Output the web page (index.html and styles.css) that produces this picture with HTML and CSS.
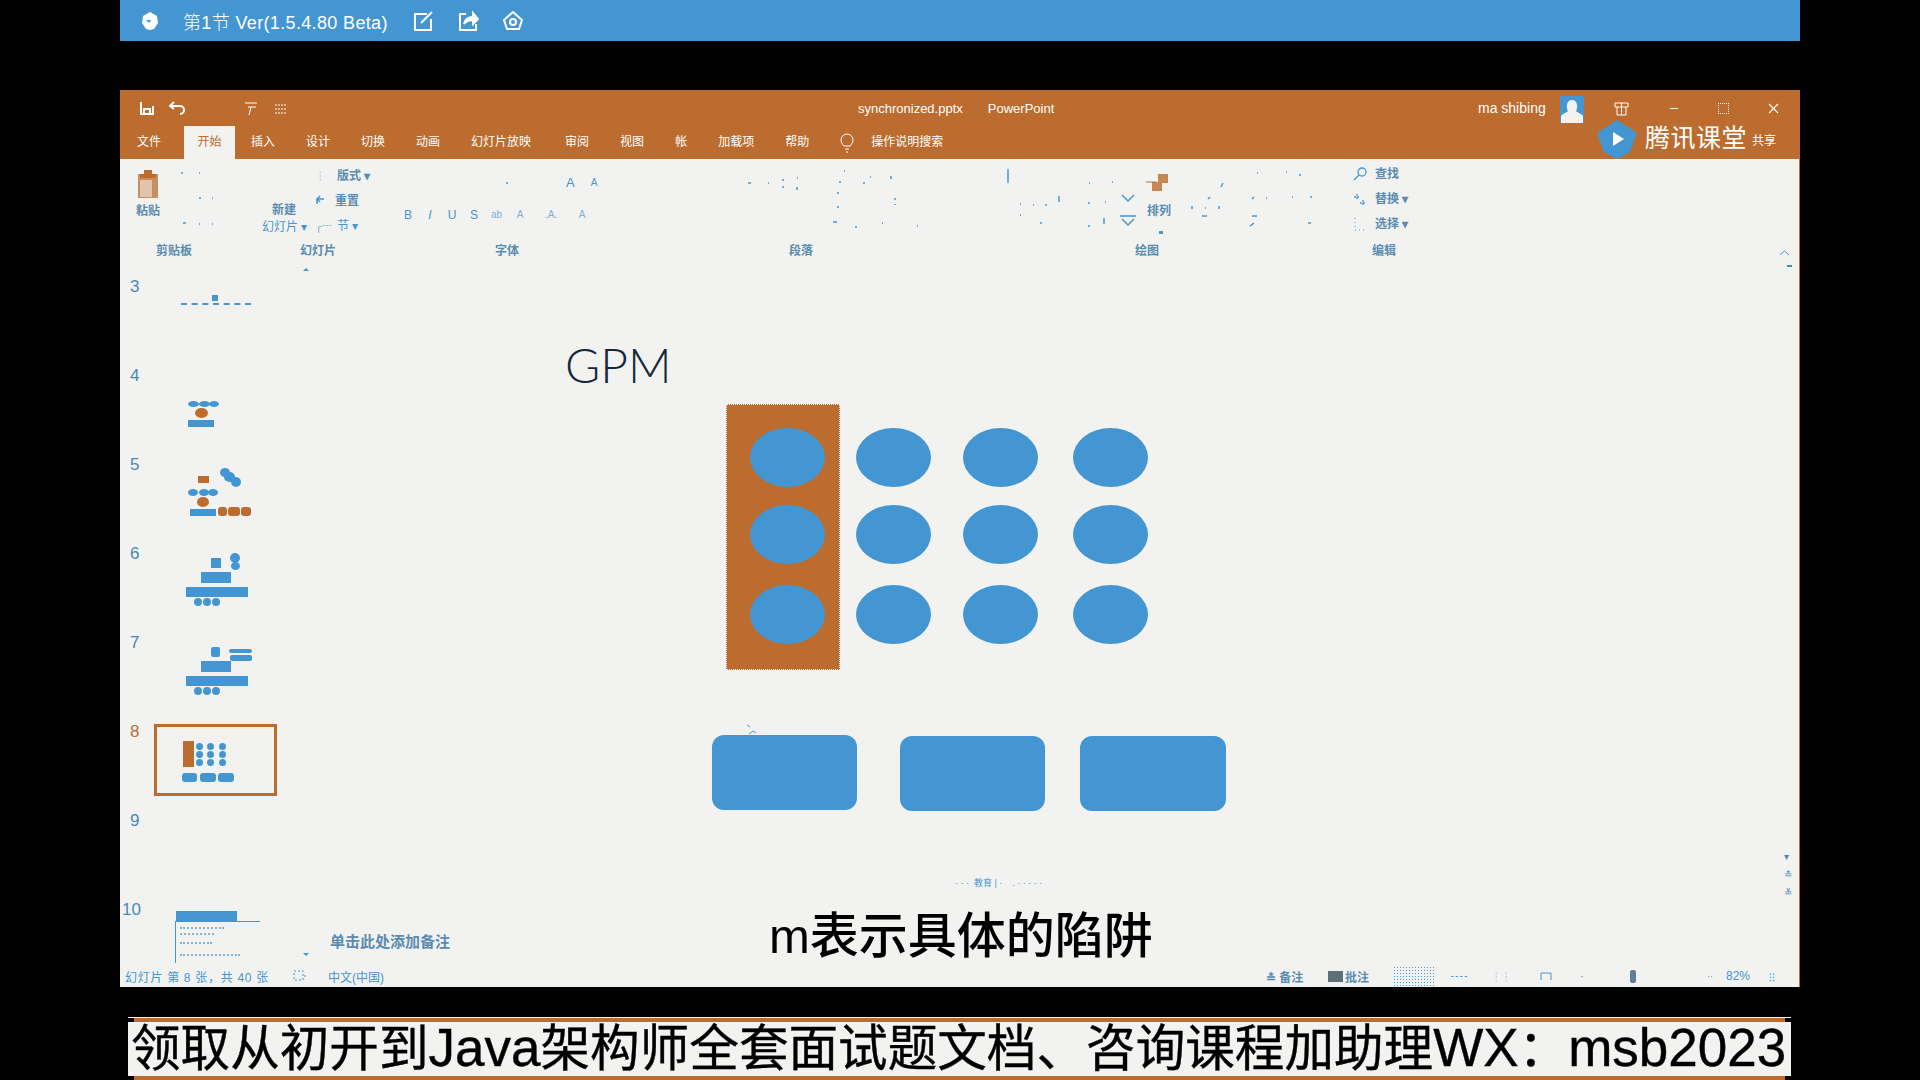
FILE: index.html
```html
<!DOCTYPE html>
<html lang="zh-CN">
<head>
<meta charset="utf-8">
<title>synchronized.pptx - PowerPoint</title>
<link rel="stylesheet" href="styles.css">
</head>
<body>
<header class="topbar">
  <svg class="tb-logo" width="20" height="20" viewBox="0 0 20 20"><path d="M10 1l7 4 1 7-4 6-4 1-4-1-4-6 1-7z" fill="#fff"/><path d="M6 9h5l-2 3z" fill="#4496d2"/></svg>
  <span class="tb-title">第1节 Ver(1.5.4.80 Beta)</span>
  <svg class="tb-icon" width="22" height="22" viewBox="0 0 22 22" fill="none" stroke="#fff" stroke-width="2"><path d="M15 4H3v16h16V9"/><path d="M9 13L20 2"/></svg>
  <svg class="tb-icon" width="22" height="22" viewBox="0 0 22 22" fill="none" stroke="#fff" stroke-width="2"><path d="M9 4H3v16h16v-6"/><path d="M7 14c1-5 5-7 9-7V3l5 6-5 5v-4c-4 0-7 1-9 4z" fill="#fff"/></svg>
  <svg class="tb-icon" width="22" height="22" viewBox="0 0 22 22" fill="none" stroke="#fff" stroke-width="2"><path d="M11 2l9 8-3 9H5l-3-9z"/><circle cx="11" cy="12" r="3"/></svg>
</header>

<main class="window">
  <div class="titlebar">
    <div class="qat">
      <svg width="16" height="16" viewBox="0 0 16 16" fill="none" stroke="#fff" stroke-width="2"><path d="M2 2v12h12V6"/><path d="M5 14V9h6v5"/></svg>
      <svg width="18" height="16" viewBox="0 0 18 16" fill="none" stroke="#fff" stroke-width="2"><path d="M2 6h9a4 4 0 0 1 0 8"/><path d="M5 2L1 6l4 3"/></svg>
      <svg class="qat-gap" width="16" height="16" viewBox="0 0 16 16" fill="none" stroke="#fff" stroke-width="1"><path d="M2 3h12M5 7h8M8 7l-2 8"/></svg>
      <svg width="16" height="16" viewBox="0 0 16 16" fill="none" stroke="#fff" stroke-width="1" stroke-dasharray="2 1"><path d="M2 5h12M2 9h12M2 13h12"/></svg>
    </div>
    <div class="doc-name"><span>synchronized.pptx</span><span>PowerPoint</span></div>
    <div class="account">
      <span class="user">ma shibing</span>
      <svg class="avatar" width="24" height="27" viewBox="0 0 24 27"><rect width="24" height="27" fill="#4496d2"/><path d="M1 27v-7c2-3 5-3 7-5-2-3-2-11 4-11s6 8 4 11c2 2 5 2 7 5v7z" fill="#f2f3f0"/></svg>
      <svg class="win-ic" width="15" height="15" viewBox="0 0 15 15" fill="none" stroke="#fff"><path d="M1 2h13v4H1zM3 6v8h9V6M7.500 2v12"/></svg>
      <span class="win-min"></span>
      <span class="win-max"></span>
      <svg class="win-close" width="11" height="11" viewBox="0 0 11 11" stroke="#fff" stroke-width="1.200"><path d="M1 1l9 9M10 1l-9 9"/></svg>
    </div>
  </div>
  <div class="tabbar">
    <nav class="tabs">
      <span class="tab t-file">文件</span>
      <span class="tab active">开始</span>
      <span class="tab t-insert">插入</span>
      <span class="tab">设计</span>
      <span class="tab">切换</span>
      <span class="tab">动画</span>
      <span class="tab t-show">幻灯片放映</span>
      <span class="tab">审阅</span>
      <span class="tab">视图</span>
      <span class="tab t-acct">帐</span>
      <span class="tab">加载项</span>
      <span class="tab">帮助</span>
      <svg class="bulb" width="14" height="20" viewBox="0 0 14 20" fill="none" stroke="#fff"><path d="M4 13C2 11 1 9 1 7a6 6 0 0 1 12 0c0 2-1 4-3 6zM5 16h4M6 19h2"/></svg>
      <span class="tab t-search">操作说明搜索</span>
    </nav>
    <div class="tencent">
      <svg width="40" height="39" viewBox="0 0 40 39"><path d="M20 0l20 13-7 19-13 7-13-7L0 13z" fill="#4496d2"/><path d="M16 12l11 7-11 7z" fill="#fff"/></svg>
      <span class="tc-name">腾讯课堂</span>
      <span class="tc-share">共享</span>
    </div>
  </div>

  <section class="ribbon">
    <div class="group g-clip">
      <div class="g-body">
        <div class="paste">
          <svg width="24" height="30" viewBox="0 0 24 30"><rect x="2" y="6" width="20" height="24" fill="#bb6c2e" opacity=".75"/><rect x="4" y="12" width="12" height="17" fill="#e0c4ab"/><path d="M8 6V2h8v4h4v4H4V6z" fill="#bb6c2e"/></svg>
          <span class="r-label">粘贴</span>
        </div>
      </div>
      <div class="g-name">剪贴板</div>
    </div>
    <div class="group g-slides">
      <div class="g-body g-row">
        <div class="newslide"><span class="r-label ctr">新建</span><span class="r-text">幻灯片 ▾</span></div>
        <div class="stack">
          <div class="st-row"><i class="tick">┆</i><span class="r-label">版式 ▾</span></div>
          <div class="st-row"><svg width="12" height="12" viewBox="0 0 12 12" fill="none" stroke="#4496d2" stroke-width="1.500"><path d="M2 9V4h7M5 1L2 4l3 3"/></svg><span class="r-label">重置</span></div>
          <div class="st-row"><i class="tick">┌┄</i><span class="r-text">节 ▾</span></div>
        </div>
      </div>
      <div class="g-name">幻灯片</div>
    </div>
    <div class="group g-font">
      <div class="g-body">
        <div class="font-a"><span>A</span><span class="small-a">A</span></div>
        <div class="font-b"><span>B</span><em>I</em><span>U</span><span>S</span><span class="faint">ab</span><span class="faint">A</span><span class="faint wide">.A.</span><span class="faint">A</span></div>
      </div>
      <div class="g-name">字体</div>
    </div>
    <div class="group g-para">
      <div class="g-body"></div>
      <div class="g-name">段落</div>
    </div>
    <div class="group g-draw">
      <div class="g-body g-row">
        <div class="chevrons">
          <svg width="14" height="9" viewBox="0 0 14 9" fill="none" stroke="#4496d2" stroke-width="1.500"><path d="M1 1l6 6 6-6"/></svg>
          <svg width="16" height="12" viewBox="0 0 16 12" fill="none" stroke="#4496d2" stroke-width="1.500"><path d="M0 1h16M2 4l6 6 6-6"/></svg>
        </div>
        <div class="arrange">
          <svg width="22" height="17" viewBox="0 0 22 17"><path d="M12 0h10v9H12z M6 8h10v9H6z" fill="#bb6c2e" opacity=".8"/><path d="M0 8h10" stroke="#bb6c2e"/></svg>
          <span class="r-label">排列</span>
          <i class="tiny-down"></i>
        </div>
      </div>
      <div class="g-name">绘图</div>
    </div>
    <div class="group g-edit">
      <div class="g-body edit-list">
        <div class="st-row"><svg width="14" height="14" viewBox="0 0 14 14" fill="none" stroke="#4496d2" stroke-width="1.300"><circle cx="9" cy="5" r="4"/><path d="M6 8l-5 5"/></svg><span class="r-label">查找</span></div>
        <div class="st-row"><svg width="14" height="14" viewBox="0 0 14 14" fill="none" stroke="#4496d2" stroke-width="1.300" stroke-dasharray="2 1"><path d="M1 5h6M4 2v6M7 11h6M10 8v5"/></svg><span class="r-label">替换 ▾</span></div>
        <div class="st-row"><svg width="14" height="14" viewBox="0 0 14 14" fill="none" stroke="#4496d2" stroke-dasharray="1 3"><path d="M2 1v12h9"/></svg><span class="r-label">选择 ▾</span></div>
      </div>
      <div class="g-name">编辑</div>
    </div>
    <svg class="specks" width="1680" height="103" viewBox="0 0 1680 103" fill="none" stroke="#4496d2" stroke-width="1.500">
      <path d="M61 14h2M79 14h1M79 39h2M92 39h1M63 64h3M79 65h1M92 65h1M386 24h2M628 24h3M663 20v2M663 27v2M743 24h2M648 24h1M677 19h1M677 28v3M724 12h1M719 23h2M750 18h1M771 17v3M717 34h2M775 39v2M717 48h2M775 45v1M713 63h4M735 68h2M762 64h1M797 67h1M900 45h1M913 46h1M925 46h2M939 37v6M969 24h1M992 23h1M968 44h2M985 43h1M900 56h1M920 64h2M968 67h2M984 59v6M1137 14h1M1166 13h1M1179 16h2M1103 24l-2 4M1090 38l-2 2M1134 38l-2 2M1146 39h1M1172 38h1M1190 38h2M1072 47v3M1085 49h1M1099 47v3M1082 57h5M1132 57h5M1130 67l4-3M1188 64h3M888 10v14"/>
    </svg>
  </section>

  <div class="workspace">
    <aside class="slides-panel">
      <div class="slide-row">
        <span class="num">3</span>
        <div class="thumb">
          <b class="sq s3a"></b>
          <b class="dash s3b"></b>
        </div>
      </div>
      <div class="slide-row">
        <span class="num">4</span>
        <div class="thumb">
          <b class="el s4a"></b><b class="el s4b"></b><b class="el s4c"></b>
          <b class="or s4d"></b><b class="sq s4e"></b>
        </div>
      </div>
      <div class="slide-row">
        <span class="num">5</span>
        <div class="thumb">
          <b class="or s5a"></b>
          <b class="el s5b"></b><b class="el s5c"></b><b class="el s5d"></b>
          <b class="el s5e"></b><b class="el s5f"></b><b class="el s5g"></b>
          <b class="or s5h"></b><b class="sq s5i"></b>
          <b class="or rd s5j"></b><b class="or rd s5k"></b><b class="or rd s5l"></b>
        </div>
      </div>
      <div class="slide-row">
        <span class="num">6</span>
        <div class="thumb">
          <b class="sq s6a"></b><b class="el s6b"></b><b class="el s6c"></b>
          <b class="sq s6d"></b><b class="sq s6e"></b>
          <b class="el s6f"></b><b class="el s6g"></b><b class="el s6h"></b>
        </div>
      </div>
      <div class="slide-row">
        <span class="num">7</span>
        <div class="thumb">
          <b class="sq s7a"></b><b class="sq s7b"></b><b class="sq s7c"></b>
          <b class="sq s6d"></b><b class="sq s6e"></b>
          <b class="el s6f"></b><b class="el s6g"></b><b class="el s6h"></b>
        </div>
      </div>
      <div class="slide-row">
        <span class="num current">8</span>
        <div class="thumb selected">
          <b class="or s8a"></b>
          <b class="el s8c c1 r1"></b><b class="el s8c c2 r1"></b><b class="el s8c c3 r1"></b>
          <b class="el s8c c1 r2"></b><b class="el s8c c2 r2"></b><b class="el s8c c3 r2"></b>
          <b class="el s8c c1 r3"></b><b class="el s8c c2 r3"></b><b class="el s8c c3 r3"></b>
          <b class="sq rd s8r1"></b><b class="sq rd s8r2"></b><b class="sq rd s8r3"></b>
        </div>
      </div>
      <div class="slide-row">
        <span class="num">9</span>
        <div class="thumb"></div>
      </div>
      <div class="slide-row">
        <span class="num n10">10</span>
        <div class="thumb">
          <b class="sq s10a"></b><b class="sq s10b"></b><b class="sq s10c"></b>
          <b class="dots s10d"></b><b class="dots s10e"></b><b class="dots s10f"></b><b class="dots s10g"></b>
        </div>
      </div>
      <i class="tri-up"></i>
      <i class="tri-down"></i>
    </aside>

    <div class="canvas">
      <h1 class="gpm">GPM</h1>
      <div class="proc-bg"></div>
      <div class="ellipses">
        <span class="ell"></span><span class="ell"></span><span class="ell"></span><span class="ell"></span>
        <span class="ell"></span><span class="ell"></span><span class="ell"></span><span class="ell"></span>
        <span class="ell"></span><span class="ell"></span><span class="ell"></span><span class="ell"></span>
      </div>
      <svg class="cursor" width="14" height="12" viewBox="0 0 14 12" fill="none" stroke="#4496d2"><path d="M1 1l3 2M3 10l4-3 3 2"/></svg>
      <div class="boxes">
        <div class="box b1"></div><div class="box b2"></div><div class="box b3"></div>
      </div>
      <div class="frag">· · ·  教育 | ·    . · · · · ·</div>
      <div class="subtitle">m表示具体的陷阱</div>
      <div class="notes">单击此处添加备注</div>
      <div class="scroll-end"><i>▾</i><i>≛</i><i>≚</i></div>
      <div class="scroll-top"><svg width="11" height="6" viewBox="0 0 11 6" fill="none" stroke="#4496d2"><path d="M1 5l4.500-4 4.500 4"/></svg><i></i></div>
    </div>
  </div>

  <footer class="statusbar">
    <span class="sb-count">幻灯片 第 8 张，共 40 张</span>
    <svg class="sb-ic" width="14" height="12" viewBox="0 0 14 12" fill="none" stroke="#4496d2" stroke-dasharray="2 2"><path d="M1 1h9v9H1zM11 6h3"/></svg>
    <span class="sb-lang">中文(中国)</span>
    <span class="sb-fill"></span>
    <span class="sb-note">≛ 备注</span>
    <span class="sb-comment"><i></i>批注</span>
    <span class="sb-view"></span>
    <span class="sb-m1">╍╍</span>
    <span class="sb-m2">┆┆</span>
    <svg class="sb-m3" width="12" height="9" viewBox="0 0 12 9" fill="none" stroke="#4496d2"><path d="M1 8V1h10v7"/></svg>
    <span class="sb-dot">·</span>
    <i class="sb-thumb"></i>
    <span class="sb-dot2">··</span>
    <span class="sb-zoom">82%</span>
    <span class="sb-fit">⁝⁝</span>
  </footer>
</main>

<footer class="banner">
  <div class="stripe"></div>
  <div class="banner-text">领取从初开到<span class="lat">Java</span>架构师全套面试题文档、咨询课程加助理<span class="lat">WX</span>：<span class="lat">msb2023</span></div>
  <div class="stripe"></div>
</footer>
</body>
</html>
```
FILE: styles.css
```css
* { box-sizing: border-box; margin: 0; padding: 0; }
html, body { width: 1920px; height: 1080px; overflow: hidden; background: #000; }
body { font-family: "Liberation Sans", "Noto Sans CJK SC", sans-serif; color: #4496d2; }
i, em { font-style: normal; }

/* top bar */
.topbar { height: 41px; margin: 0 120px; background: #4496d2; display: flex; align-items: center; color: #fff; padding-left: 20px; }
.tb-title { margin-left: 23px; font-size: 18px; font-weight: 300; width: 229px; white-space: nowrap; letter-spacing: .35px; }
.tb-icon { margin-right: 23px; }

/* window */
.window { margin: 49px 120px 0; height: 897px; background: #f2f3f0; display: flex; flex-direction: column; border-right: 1px solid #bb6c2e; }
.titlebar { height: 36px; background: #bb6c2e; display: flex; align-items: center; color: #fff; font-size: 12px; position: relative; }
.qat { display: flex; align-items: center; gap: 14px; padding-left: 19px; width: 720px; }
.qat-gap { margin-left: 42px; }
.doc-name { display: flex; gap: 25px; width: 638px; padding-left: 18px; font-size: 13px; white-space: nowrap; }
.account { display: flex; align-items: center; font-size: 14px; margin-left: 0; }
.user { width: 82px; white-space: nowrap; padding-left: 0; }
.avatar { margin-right: 30px; margin-top: 2px; }
.win-ic { margin-right: 0; }
.win-min { width: 8px; height: 1px; background: #fff; margin-left: 41px; }
.win-max { width: 11px; height: 11px; border: 1px dotted #fff; margin-left: 40px; }
.win-close { margin-left: 39px; }

.tabbar { height: 33px; background: #bb6c2e; display: flex; justify-content: space-between; position: relative; }
.tabs { display: flex; align-items: center; color: #fff; font-size: 12px; padding-left: 17px; }
.tab { white-space: nowrap; margin-right: 31px; line-height: 33px; }
.t-file { margin-right: 23px; }
.tab.active { width: 51px; height: 33px; background: #f2f3f0; color: #bb6c2e; text-align: center; margin-right: 16px; }
.t-insert { margin-right: 31px; }
.t-show { margin-right: 34px; }
.bulb { margin-left: 0; margin-right: 17px; }
.tencent { display: flex; align-items: center; color: #fff; margin-right: 23px; margin-top: -6px; height: 39px; }
.tc-name { font-size: 25px; margin-left: 8px; letter-spacing: .5px; line-height: 30px; margin-top: -3px; }
.tc-share { font-size: 12px; margin-left: 5px; }

/* ribbon */
.ribbon { height: 103px; display: flex; position: relative; flex: none; }
.group { display: flex; flex-direction: column; flex: none; }
.g-body { height: 85px; }
.g-row { display: flex; }
.g-name { font-size: 12px; font-weight: 700; color: #5a8bb0; text-align: center; line-height: 14px; }
.g-clip { width: 108px; }
.g-slides { width: 172px; }
.g-slides .g-name { padding-left: 8px; }
.g-font { width: 206px; }
.g-font .g-name { padding-left: 8px; }
.g-para { width: 390px; }
.g-draw { width: 302px; }
.g-edit { width: 172px; }
.r-label { font-size: 12px; font-weight: 700; color: #5a8bb0; white-space: nowrap; line-height: 14px; }
.r-text { font-size: 12px; color: #4496d2; white-space: nowrap; line-height: 14px; }
.paste { display: flex; flex-direction: column; align-items: flex-start; padding: 9px 0 0 16px; gap: 6px; }
.newslide { display: flex; flex-direction: column; padding: 44px 0 0 34px; gap: 3px; width: 87px; }
.ctr { padding-left: 10px; }
.stack { display: flex; flex-direction: column; padding-top: 4px; }
.st-row { height: 25px; display: flex; align-items: center; gap: 8px; }
.tick { width: 14px; font-size: 10px; color: #4496d2; white-space: nowrap; }
.st-row svg { flex: none; }
.font-a { display: flex; gap: 16px; padding: 16px 0 0 166px; font-size: 13px; line-height: 16px; height: 46px; }
.small-a { font-size: 10px; }
.font-b { display: flex; padding-left: 3px; font-size: 12px; line-height: 20px; gap: 12px; }
.font-b span, .font-b em { width: 10px; text-align: center; }
.font-b em { font-style: italic; }
.font-b .faint { font-size: 10px; opacity: .7; margin-right: 2px; }
.font-b .wide { width: 24px; }
.chevrons { display: flex; flex-direction: column; align-items: center; gap: 12px; padding: 35px 0 0 121px; width: 143px; }
.arrange { display: flex; flex-direction: column; align-items: flex-start; padding: 15px 0 0 7px; gap: 13px; }
.arrange .r-label { margin-left: 1px; }
.tiny-down { width: 4px; height: 3px; background: #4496d2; margin: 0 0 0 13px; }
.edit-list { display: flex; flex-direction: column; padding: 2px 0 0 55px; }
.specks { position: absolute; left: 0; top: 0; }

/* workspace */
.workspace { flex: 1; display: flex; position: relative; min-height: 0; }
.slides-panel { width: 190px; padding-top: 14px; position: relative; overflow: hidden; flex: none; }
.slide-row { height: 89px; display: flex; padding-left: 34px; position: relative; }
.num { position: absolute; left: 10px; top: 1px; font-size: 17px; line-height: 20px; color: #4a87b5; }
.num.n10 { left: 2px; font-size: 17px; }
.num.current { color: #bb6c2e; }
.thumb { width: 123px; height: 72px; position: relative; margin-top: 3px; }
.thumb.selected { box-shadow: inset 0 0 0 3px #bb6c2e; }
.thumb b { position: absolute; display: block; }
.sq { background: #4496d2; }
.el { background: #4496d2; border-radius: 50%; }
.or { background: #bb6c2e; }
.rd { border-radius: 3px; }
.dash { height: 1px; border-top: 2px dashed #4496d2; }
.dots { height: 5px; border-top: 2px dotted #7fb5dc; }
.s3a { left: 58px; top: 16px; width: 6px; height: 6px; }
.s3b { left: 27px; top: 24px; width: 70px; }
.s4a { left: 34px; top: 33px; width: 11px; height: 6px; }
.s4b { left: 45px; top: 33px; width: 11px; height: 6px; }
.s4c { left: 55px; top: 33px; width: 10px; height: 6px; }
.s4d { left: 41px; top: 40px; width: 13px; height: 10px; border-radius: 50%; }
.s4e { left: 34px; top: 52px; width: 26px; height: 7px; }
.s5a { left: 44px; top: 19px; width: 11px; height: 7px; }
.s5b { left: 66px; top: 11px; width: 10px; height: 9px; }
.s5c { left: 70px; top: 15px; width: 11px; height: 10px; }
.s5d { left: 77px; top: 20px; width: 10px; height: 10px; }
.s5e { left: 34px; top: 32px; width: 10px; height: 7px; }
.s5f { left: 45px; top: 32px; width: 10px; height: 7px; }
.s5g { left: 54px; top: 32px; width: 10px; height: 7px; }
.s5h { left: 43px; top: 40px; width: 12px; height: 10px; border-radius: 50%; }
.s5i { left: 36px; top: 52px; width: 26px; height: 7px; }
.s5j { left: 64px; top: 50px; width: 9px; height: 9px; }
.s5k { left: 74px; top: 50px; width: 12px; height: 9px; }
.s5l { left: 87px; top: 50px; width: 10px; height: 9px; }
.s6a { left: 57px; top: 12px; width: 10px; height: 10px; }
.s6b { left: 76px; top: 7px; width: 10px; height: 10px; }
.s6c { left: 77px; top: 16px; width: 9px; height: 8px; }
.s6d { left: 47px; top: 26px; width: 30px; height: 11px; }
.s6e { left: 32px; top: 41px; width: 62px; height: 10px; }
.s6f { left: 40px; top: 52px; width: 8px; height: 8px; }
.s6g { left: 49px; top: 52px; width: 8px; height: 8px; }
.s6h { left: 58px; top: 52px; width: 8px; height: 8px; }
.s7a { left: 57px; top: 12px; width: 9px; height: 10px; border-radius: 2px; }
.s7b { left: 75px; top: 14px; width: 23px; height: 4px; border-radius: 2px; }
.s7c { left: 76px; top: 20px; width: 22px; height: 6px; border-radius: 2px; }
.s8a { left: 29px; top: 17px; width: 11px; height: 26px; }
.s8c { width: 7px; height: 7px; }
.c1 { left: 42px; } .c2 { left: 53px; } .c3 { left: 65px; }
.r1 { top: 19px; } .r2 { top: 27px; } .r3 { top: 35px; }
.s8r1 { left: 28px; top: 49px; width: 15px; height: 9px; }
.s8r2 { left: 46px; top: 49px; width: 16px; height: 9px; }
.s8r3 { left: 64px; top: 49px; width: 16px; height: 9px; }
.s10a { left: 22px; top: 9px; width: 61px; height: 10px; }
.s10b { left: 22px; top: 19px; width: 84px; height: 1px; }
.s10c { left: 21px; top: 19px; width: 1px; height: 42px; }
.s10d { left: 26px; top: 25px; width: 44px; }
.s10e { left: 26px; top: 31px; width: 34px; }
.s10f { left: 26px; top: 40px; width: 32px; }
.s10g { left: 26px; top: 52px; width: 60px; }
.tri-up, .tri-down { position: absolute; left: 183px; width: 0; height: 0; border-left: 3px solid transparent; border-right: 3px solid transparent; }
.tri-up { top: 6px; border-bottom: 3px solid #4496d2; }
.tri-down { top: 691px; border-top: 3px solid #4496d2; }

/* slide canvas */
.canvas { flex: 1; position: relative; }
.gpm { position: absolute; left: 255px; top: 71px; font-family: Lato, "Liberation Sans", sans-serif; font-weight: 300; font-size: 48px; line-height: 64px; color: #16283a; }
.proc-bg { position: absolute; left: 416px; top: 142px; width: 114px; height: 266px; background: #bb6c2e; border: 1px dotted #f2f3f0; }
.ellipses { position: absolute; left: 440px; top: 166px; display: grid; grid-template-columns: 106px 107px 110px 75px; grid-template-rows: 77px 80px 59px; }
.ell { width: 75px; height: 59px; border-radius: 50%; background: #4496d2; }
.cursor { position: absolute; left: 436px; top: 462px; }
.boxes { position: absolute; left: 402px; top: 473px; display: flex; }
.box { width: 145px; height: 75px; border-radius: 12px; background: #4496d2; }
.b2 { margin: 1px 35px 0 43px; }
.b3 { margin-top: 1px; width: 146px; }
.frag { position: absolute; left: 645px; top: 616px; font-size: 9px; white-space: pre; line-height: 10px; }
.subtitle { position: absolute; left: 459px; top: 639px; font-size: 49px; line-height: 70px; color: #000; white-space: nowrap; font-weight: 500; }
.notes { position: absolute; left: 20px; top: 671px; font-size: 15px; line-height: 18px; color: #5a8bb0; font-weight: 700; white-space: nowrap; }
.scroll-end { position: absolute; left: 1474px; top: 588px; display: flex; flex-direction: column; gap: 5px; font-size: 10px; line-height: 13px; color: #4a87b5; }
.scroll-top { position: absolute; left: 1469px; top: -12px; display: flex; flex-direction: column; align-items: center; gap: 9px; width: 11px; }
.scroll-top i { width: 5px; height: 2px; background: #4a87b5; margin-left: 10px; }

/* status bar */
.statusbar { height: 22px; display: flex; align-items: center; font-size: 12px; color: #4496d2; padding: 0 6px 0 5px; flex: none; white-space: nowrap; }
.sb-count { width: 168px; letter-spacing: .7px; }
.sb-ic { margin-right: 21px; }
.sb-lang { width: 70px; }
.sb-fill { flex: 1; }
.sb-note { width: 62px; font-weight: 700; color: #5a8bb0; }
.sb-comment { width: 65px; display: flex; align-items: center; gap: 2px; font-weight: 700; color: #5a8bb0; }
.sb-comment i { width: 15px; height: 11px; background: #5f6f78; }
.sb-view { width: 41px; height: 21px; background: radial-gradient(#4496d2 1px, transparent 1px) 0 0 / 3px 3px; margin-right: 16px; }
.sb-m1 { width: 41px; font-size: 9px; }
.sb-m2 { width: 49px; font-size: 10px; }
.sb-m3 { margin-right: 28px; }
.sb-dot { width: 50px; }
.sb-thumb { width: 6px; height: 13px; background: #5f7f98; border-radius: 2px; margin-right: 71px; }
.sb-dot2 { width: 19px; font-size: 9px; }
.sb-zoom { width: 43px; font-size: 12px; }
.sb-fit { width: 24px; font-size: 11px; }

/* banner */
.banner { margin: 30px 128px 0; width: 1663px; height: 63px; border-top: 1px solid #f2f3f0; display: flex; flex-direction: column; }
.stripe { height: 4px; margin: 0 6px; background: #bb6c2e; flex: none; position: relative; z-index: 1; }
.banner-text { flex: none; background: #f2f3f0; color: #000; font-size: 49.6px; line-height: 54px; height: 54px; padding-left: 3px; white-space: nowrap; -webkit-text-stroke: .4px #000; }
.lat { font-size: 53px; line-height: 50px; }
```
